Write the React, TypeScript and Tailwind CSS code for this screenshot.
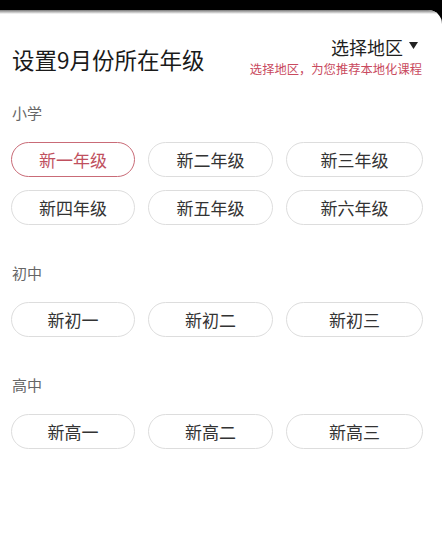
const font = { fontFamily: '"Noto Sans CJK SC", "Noto Sans", sans-serif' }

const sections = [
  { label: "小学", grades: ["新一年级", "新二年级", "新三年级", "新四年级", "新五年级", "新六年级"] },
  { label: "初中", grades: ["新初一", "新初二", "新初三"] },
  { label: "高中", grades: ["新高一", "新高二", "新高三"] },
]

function GradeButton({ name, active }: { name: string; active?: boolean }) {
  return (
    <button
      className={
        active
          ? "h-[35px] rounded-full border-[1.5px] border-[#c96b77] bg-white text-[17px] leading-none text-[#c0505e]"
          : "h-[35px] rounded-full border border-[#dddddd] bg-white text-[17px] leading-none text-[#333333]"
      }
    >
      {name}
    </button>
  )
}

export default function App() {
  return (
    <div className="w-[442px] h-[544px] bg-black overflow-hidden" style={font}>
      <div className="h-[10px] bg-black" />
      <div className="h-[534px] bg-white rounded-tr-[14px] overflow-hidden">
        <div className="h-[4px] bg-gradient-to-b from-[#7a7a7a] to-white" />

        {/* Header */}
        <div className="flex justify-between items-start pt-[22px] pl-[12px] pr-[20px]">
          <h1 className="mt-[9px] text-[22.5px] leading-[28px] font-normal text-[#1a1a1a]">
            设置9月份所在年级
          </h1>
          <div className="flex flex-col items-end">
            <div className="flex items-center h-[22px] mr-[4px]">
              <span className="text-[18px] leading-[22px] text-[#1f1f1f]">选择地区</span>
              <svg className="ml-[6px] mb-[4px]" width="9" height="7" viewBox="0 0 9 7">
                <path d="M0 0 H9 L4.5 7 Z" fill="#222222" />
              </svg>
            </div>
            <div className="mt-[3px] text-[12.3px] leading-[16px] text-[#c94a5e]">
              选择地区，为您推荐本地化课程
            </div>
          </div>
        </div>

        {/* Grade sections */}
        <div className="pl-[11px] mt-[26px] flex flex-col gap-[38px]">
          {sections.map((s, si) => (
            <div key={s.label}>
              <div className="pl-[1px] text-[15px] leading-[20px] text-[#666666]">{s.label}</div>
              <div className="mt-[19px] grid grid-cols-[124px_125px_137px] gap-x-[13px] gap-y-[13px]">
                {s.grades.map((g, gi) => (
                  <GradeButton key={g} name={g} active={si === 0 && gi === 0} />
                ))}
              </div>
            </div>
          ))}
        </div>
      </div>
    </div>
  )
}
